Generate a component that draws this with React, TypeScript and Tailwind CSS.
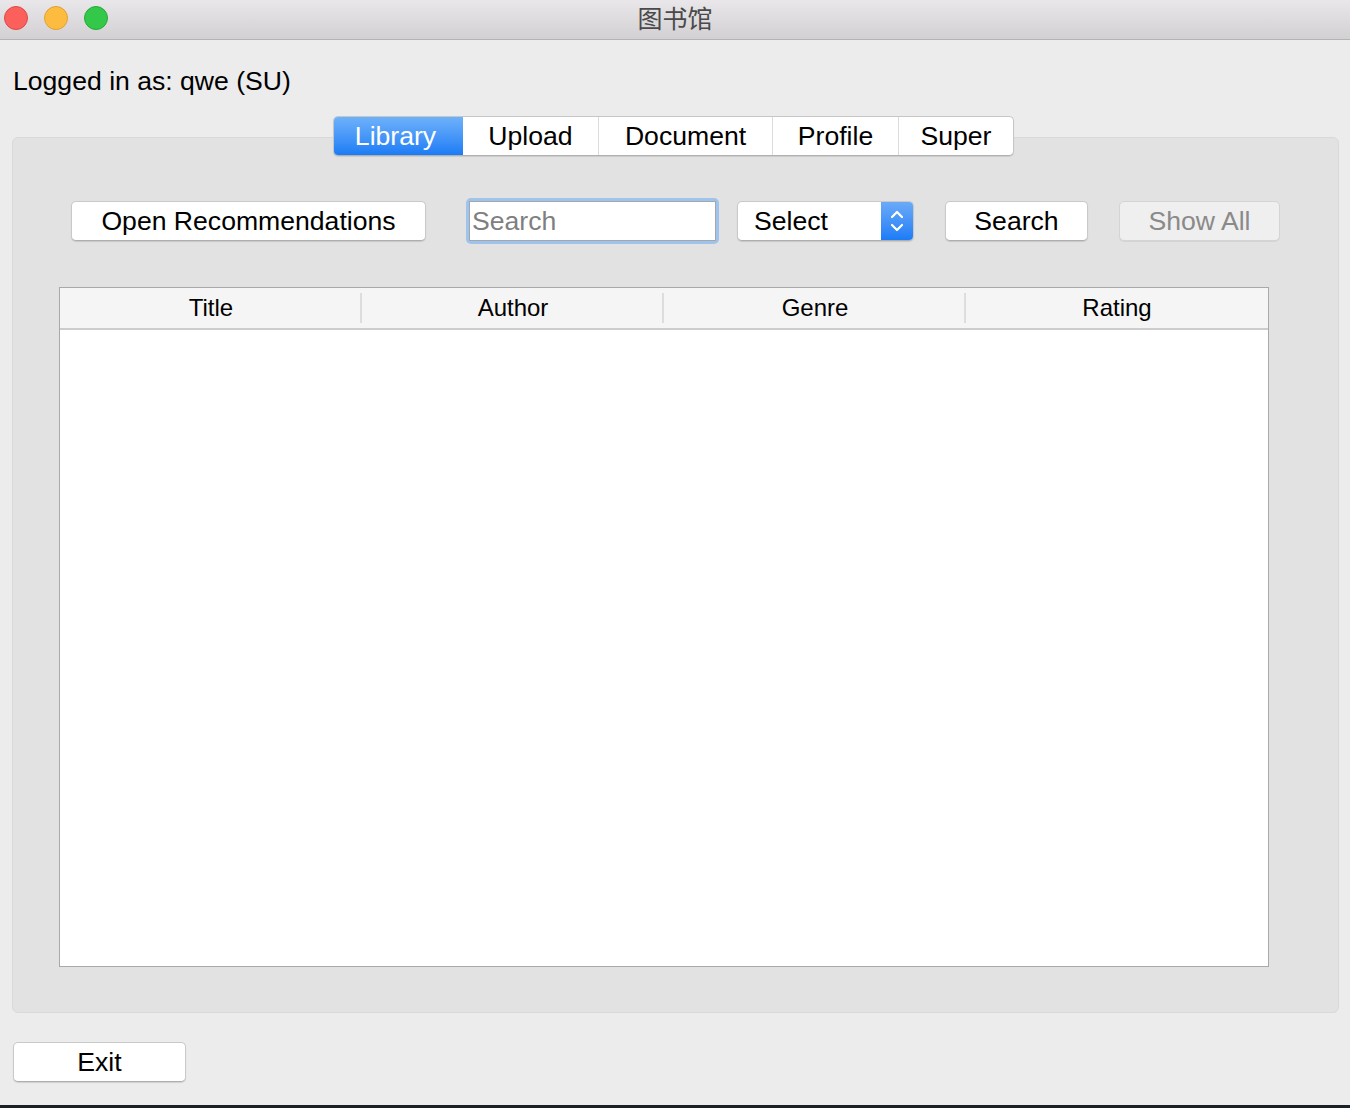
import React from "react";

const font = { fontFamily: '"Liberation Sans", Arial, "Noto Sans CJK SC", sans-serif' };

function Btn({ children, className = "", disabled = false }: { children: React.ReactNode; className?: string; disabled?: boolean }) {
  return (
    <div
      className={
        "flex items-center justify-center rounded-[5px] border h-[40px] text-[26.6px] leading-none " +
        (disabled
          ? "bg-[#efefef] border-[#d4d4d4] text-[#8a8a8a] shadow-[0_1px_0_rgba(0,0,0,0.06)] "
          : "bg-white border-[#c9c9c9] border-b-[#aeaeae] text-black shadow-[0_1px_1px_rgba(0,0,0,0.12)] ") +
        className
      }
    >
      {children}
    </div>
  );
}

export default function App() {
  const tabs = [
    { label: "Library", w: "w-[129px]" },
    { label: "Upload", w: "w-[135px]" },
    { label: "Document", w: "w-[174px]" },
    { label: "Profile", w: "w-[126px]" },
    { label: "Super", w: "w-[115px]" },
  ];
  return (
    <div className="w-[1350px] h-[1108px] bg-[#ececec] flex flex-col overflow-hidden" style={font}>
      {/* Title bar */}
      <div className="h-[40px] shrink-0 bg-gradient-to-b from-[#e9e7e9] to-[#d2d0d2] border-b border-[#b3b3b3] flex items-center relative">
        <div className="flex items-center gap-[16px] pl-[4px] -mt-[3px]">
          <div className="w-[24px] h-[24px] rounded-full bg-[#fc605c] border border-[#de4a43]" />
          <div className="w-[24px] h-[24px] rounded-full bg-[#fdbc40] border border-[#dea236]" />
          <div className="w-[24px] h-[24px] rounded-full bg-[#34c84a] border border-[#27aa35]" />
        </div>
        <div className="absolute left-0 right-0 top-0 h-[36px] flex items-center justify-center text-[25px] text-[#4a4a4a] pointer-events-none" style={{ fontFamily: '"Noto Sans CJK SC", sans-serif' }}>
          图书馆
        </div>
      </div>

      {/* Logged in */}
      <div className="mt-[26px] pl-[13px] text-[26.6px] leading-[30px] text-black">Logged in as: qwe (SU)</div>

      {/* Tabs */}
      <div className="mt-[20px] flex justify-center relative z-10 pr-[3px]">
        <div className="flex h-[40px] rounded-[5px] border border-[#c6c6c6] border-b-[#b0b0b0] bg-white shadow-[0_1px_1px_rgba(0,0,0,0.1)] overflow-hidden">
          {tabs.map((t, i) => (
            <div
              key={t.label}
              className={
                "flex items-center justify-center text-[26.6px] leading-none " +
                t.w +
                (i === 0
                  ? " bg-gradient-to-b from-[#6db1fa] to-[#1a7cf5] text-white pr-[6px]"
                  : " text-black") +
                (i > 1 ? " border-l border-[#dcdcdc]" : "")
              }
            >
              {t.label}
            </div>
          ))}
        </div>
      </div>

      {/* Panel */}
      <div className="-mt-[19px] ml-[12px] w-[1327px] h-[876px] shrink-0 rounded-[6px] bg-[#e2e2e2] border border-[#d9d9d9] flex flex-col">
        <div className="mt-[60px] h-[46px] flex items-center pl-[58px]">
          <Btn className="w-[355px]">Open Recommendations</Btn>
          <div className="ml-[40px] w-[253px] h-[46px] rounded-[5px] bg-[#9ec4ee] p-[3px]">
            <div className="w-full h-full bg-white border border-[#a6a6a6] flex items-center pl-[2px] text-[26.6px] text-[#7f7f7f] leading-none">
              Search
            </div>
          </div>
          <div className="ml-[18px] w-[177px] h-[40px] rounded-[5px] border border-[#c9c9c9] border-b-[#aeaeae] bg-white shadow-[0_1px_1px_rgba(0,0,0,0.12)] flex overflow-hidden">
            <div className="flex-1 flex items-center pl-[16px] text-[26.6px] leading-none text-black">Select</div>
            <div className="w-[32px] bg-gradient-to-b from-[#6aaaf8] to-[#1a7cf6] flex items-center justify-center">
              <svg width="16" height="28" viewBox="0 0 16 28" fill="none" stroke="white" strokeWidth="2.2" strokeLinecap="round" strokeLinejoin="round">
                <path d="M3 10 L8 5 L13 10" />
                <path d="M3 18 L8 23 L13 18" />
              </svg>
            </div>
          </div>
          <Btn className="ml-[31px] w-[143px]">Search</Btn>
          <Btn className="ml-[31px] w-[161px]" disabled>Show All</Btn>
        </div>

        {/* Table */}
        <div className="mt-[43px] ml-[46px] w-[1210px] h-[680px] border border-[#a9a9a9] bg-white flex flex-col">
          <div className="h-[42px] bg-[#f5f5f5] border-b-2 border-[#cccccc] grid grid-cols-4 items-center">
            {["Title", "Author", "Genre", "Rating"].map((h, i) => (
              <div key={h} className="relative h-full flex items-center justify-center text-[24px] leading-none text-black">
                {h}
                {i < 3 && <div className="absolute right-0 top-[5px] bottom-[5px] w-[2px] bg-[#dddddd]" />}
              </div>
            ))}
          </div>
          <div className="flex-1" />
        </div>
      </div>

      {/* Exit */}
      <div className="mt-[29px] ml-[13px]">
        <Btn className="w-[173px]">Exit</Btn>
      </div>

      <div className="flex-1" />
      <div className="h-[3px] bg-[#1b2127] shrink-0" />
    </div>
  );
}
